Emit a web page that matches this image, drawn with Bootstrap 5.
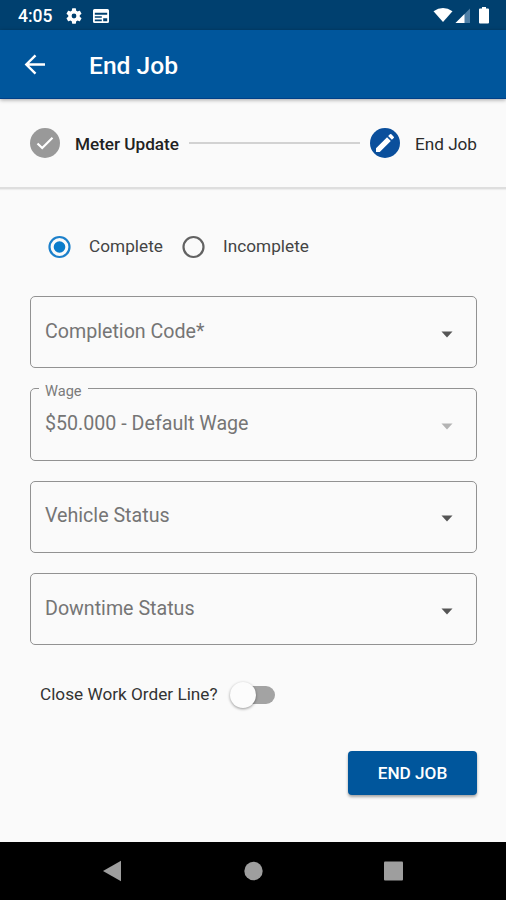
<!DOCTYPE html>
<html lang="en">
<head>
<meta charset="utf-8">
<meta name="viewport" content="width=device-width, initial-scale=1">
<title>End Job</title>
<link rel="stylesheet" href="https://cdn.jsdelivr.net/npm/bootstrap@5.3.0/dist/css/bootstrap.min.css">
<style>
  body { font-family: Roboto, "Liberation Sans", sans-serif; background: #fafafa; color: #2b2b2b; line-height: 1.2; }
  .screen { width: 506px; height: 900px; white-space: nowrap; }
  .status-bar { height: 30px; background: #00406f; padding: 2px 14px 0 18px; font-size: 17.5px; font-weight: 500; }
  .icon-gear { margin: 0 0 1px 14px; }
  .icon-window { margin: 0 0 1px 10px; }
  .app-bar { height: 69px; background: #00569c; padding-left: 22px; box-shadow: 0 1px 4px rgba(0,0,0,.35); border-bottom: 1px solid #004088; z-index: 1; }
  .app-title { font-size: 24.6px; font-weight: 500; margin: 4px 0 0 41px; }
  .stepper { height: 90px; padding: 0 29px 0 30px; font-size: 17.2px; border-bottom: 2px solid #dedede; box-shadow: 0 1px 1px rgba(0,0,0,.05); }
  .step-dot { width: 30px; height: 30px; margin-right: 15px; }
  .step-done { background: #999; }
  .step-now { background: #0a4f9c; }
  .step-name { margin-top: 2px; letter-spacing: -.03px; }
  .step-name.done { font-weight: 500; color: #222; }
  .step-line { height: 2px; background: #d2d2d2; margin: 0 10px; }
  .choices { height: 24px; margin: 46px 0 37px 47px; font-size: 17.2px; color: #444; gap: 18px; }
  .choices span { margin-top: -1px; letter-spacing: .03px; }
  .fields { padding: 0 29px 0 30px; gap: 20px; }
  .select-box { height: 72.3px; border: 1.3px solid #929292; border-radius: 5px; padding: 0 23px 0 14px; font-size: 19.65px; color: #757575; }
  .select-box span { margin-top: -1px; }
  .select-box svg { margin-top: 4px; }
  .select-box .float-label { top: -6px; left: 8px; padding: 0 6px; background: #fafafa; font-size: 14.6px; line-height: 16px; margin: 0; color: #7b7b7b; }
  .toggle-row { height: 30px; margin: 34.6px 0 0 40px; font-size: 17.2px; color: #333; }
  .toggle-track { width: 45px; height: 26px; margin-left: 12px; }
  .toggle-track::before { content: ""; width: 33px; height: 18px; border-radius: 9px; background: #a3a3a3; margin-left: 12px; }
  .toggle-thumb { width: 26px; height: 26px; left: 0; top: 0; background: #fcfcfc; box-shadow: 0 1px 3px rgba(0,0,0,.4); }
  .btn-end { --bs-btn-color: #fff; --bs-btn-bg: #00569c; --bs-btn-hover-color: #fff; --bs-btn-hover-bg: #004a88; width: 129px; height: 44px; margin: 41px 29px 0 auto; padding-top: 8px; border: 0; border-radius: 4px; font-size: 17.2px; font-weight: 500; line-height: 1; box-shadow: 0 2px 3px rgba(0,0,0,.35); }
  .nav-keys { height: 58px; background: #000; padding: 0 102px; }
</style>
<script src="https://cdn.jsdelivr.net/npm/bootstrap@5.3.0/dist/js/bootstrap.bundle.min.js"></script>
</head>
<body>
<div class="screen d-flex flex-column overflow-hidden">
  <div class="status-bar d-flex align-items-center text-white">
    <span>4:05</span>
    <svg class="icon-gear" width="16" height="16" viewBox="2 2 20 20" fill="#fff"><path d="M19.140 12.940c.04-.3.060-.61.060-.94s-.02-.64-.07-.94l2.030-1.580a.49.490 0 0 0 .12-.61l-1.920-3.320a.49.490 0 0 0-.59-.22l-2.390.96c-.5-.38-1.030-.7-1.620-.94L14.400 2.810a.48.480 0 0 0-.48-.41h-3.840a.47.470 0 0 0-.47.410L9.250 5.350c-.59.240-1.130.57-1.620.94l-2.390-.96a.48.480 0 0 0-.59.220L2.740 8.870a.47.470 0 0 0 .12.610l2.030 1.580c-.05.3-.09.63-.09.940s.02.640.07.940l-2.030 1.580a.49.490 0 0 0-.12.610l1.920 3.320c.12.220.37.290.59.220l2.390-.96c.5.380 1.030.7 1.620.94l.36 2.540c.05.240.24.410.48.410h3.840c.24 0 .44-.17.470-.41l.36-2.540c.59-.24 1.130-.56 1.620-.94l2.390.96c.22.080.47 0 .59-.22l1.920-3.320a.47.470 0 0 0-.12-.61ZM12 15a3 3 0 1 1 0-6 3 3 0 0 1 0 6Z"/></svg>
    <svg class="icon-window" width="18" height="16" viewBox="0 0 18 16"><path fill="#fff" fill-rule="evenodd" d="M2.500 1h13Q17 1 17 2.500v11q0 1.500-1.500 1.500h-13Q1 15 1 13.500v-11Q1 1 2.500 1ZM2.800 4.800v1.900h12.400V4.800ZM2.800 8.300v1.500h7V8.300ZM2.800 11.400v1.800h7v-1.800ZM11.200 10.300v2.900h4v-2.900Z"/></svg>
    <svg class="ms-auto" width="60" height="22" viewBox="0 0 60 22">
      <path d="M1.500 6.200Q11 0 20.500 6.200L11 17Z" fill="#fff"/>
      <path d="M23.500 18 38 3.500V18Z" fill="#4f7fa6"/>
      <path d="M23.500 18 32.500 9V18Z" fill="#fff"/>
      <path d="M50 2h4v1.500h2q1 0 1 1v13q0 1-1 1h-8q-1 0-1-1V4.500q0-1 1-1h2Z" fill="#fff"/>
    </svg>
  </div>

  <header class="app-bar d-flex align-items-center text-white position-relative flex-shrink-0">
    <svg width="26" height="26" viewBox="0 0 26 26" fill="none" stroke="#fff" stroke-width="2.400"><path d="M23 13.500H5M13.500 4.300 4.300 13.500l9.200 9.200"/></svg>
    <h1 class="app-title mb-0">End Job</h1>
  </header>

  <div class="stepper d-flex align-items-center flex-shrink-0">
    <span class="step-dot step-done rounded-circle d-flex align-items-center justify-content-center"><svg width="20" height="18" viewBox="0 0 20 18" fill="none" stroke="#fff" stroke-width="2.200"><path d="M2.500 9.500 7.200 14 17.500 3.800"/></svg></span>
    <span class="step-name done">Meter Update</span>
    <span class="step-line flex-grow-1"></span>
    <span class="step-dot step-now rounded-circle d-flex align-items-center justify-content-center"><svg width="20" height="20" viewBox="2 2 20 20" fill="#fff"><path d="M3 17.250V21h3.750L17.810 9.940l-3.750-3.750ZM20.710 7.040a1 1 0 0 0 0-1.410l-2.340-2.340a1 1 0 0 0-1.410 0l-1.830 1.830 3.750 3.750Z"/></svg></span>
    <span class="step-name">End Job</span>
  </div>

  <div class="choices d-flex align-items-center">
    <svg width="24" height="24" viewBox="0 0 24 24"><circle cx="12.500" cy="12" r="10" fill="none" stroke="#1c80cb" stroke-width="2.200"/><circle cx="12.500" cy="12" r="5.800" fill="#0a7ccb"/></svg>
    <span>Complete</span>
    <svg width="24" height="24" viewBox="0 0 24 24"><circle cx="12.500" cy="12" r="10" fill="none" stroke="#626262" stroke-width="2.200"/></svg>
    <span>Incomplete</span>
  </div>

  <div class="fields d-flex flex-column">
    <div class="select-box d-flex align-items-center justify-content-between">
      <span>Completion Code*</span>
      <svg width="12" height="7" viewBox="0 0 12 7"><path d="M.5.5h11L6 6.500Z" fill="#555"/></svg>
    </div>
    <div class="select-box d-flex align-items-center justify-content-between position-relative">
      <span class="float-label position-absolute">Wage</span>
      <span>$50.000 - Default Wage</span>
      <svg width="12" height="7" viewBox="0 0 12 7"><path d="M.5.5h11L6 6.500Z" fill="#b3b3b3"/></svg>
    </div>
    <div class="select-box d-flex align-items-center justify-content-between">
      <span>Vehicle Status</span>
      <svg width="12" height="7" viewBox="0 0 12 7"><path d="M.5.5h11L6 6.500Z" fill="#555"/></svg>
    </div>
    <div class="select-box d-flex align-items-center justify-content-between">
      <span>Downtime Status</span>
      <svg width="12" height="7" viewBox="0 0 12 7"><path d="M.5.5h11L6 6.500Z" fill="#555"/></svg>
    </div>
  </div>

  <div class="toggle-row d-flex align-items-center">
    <span>Close Work Order Line?</span>
    <span class="toggle-track d-flex align-items-center position-relative"><span class="toggle-thumb rounded-circle position-absolute"></span></span>
  </div>

  <button type="button" class="btn btn-end">END JOB</button>

  <nav class="nav-keys d-flex align-items-center justify-content-between mt-auto flex-shrink-0">
    <svg width="20" height="22" viewBox="0 0 20 22"><path d="M1 11 19 .8v20.400Z" fill="#9e9e9e"/></svg>
    <svg width="20" height="20" viewBox="0 0 20 20"><circle cx="10.500" cy="10" r="9.200" fill="#9e9e9e"/></svg>
    <svg width="20" height="20" viewBox="0 0 20 20"><rect x="0" y=".5" width="19" height="19" rx="1" fill="#9e9e9e"/></svg>
  </nav>
</div>
</body>
</html>
